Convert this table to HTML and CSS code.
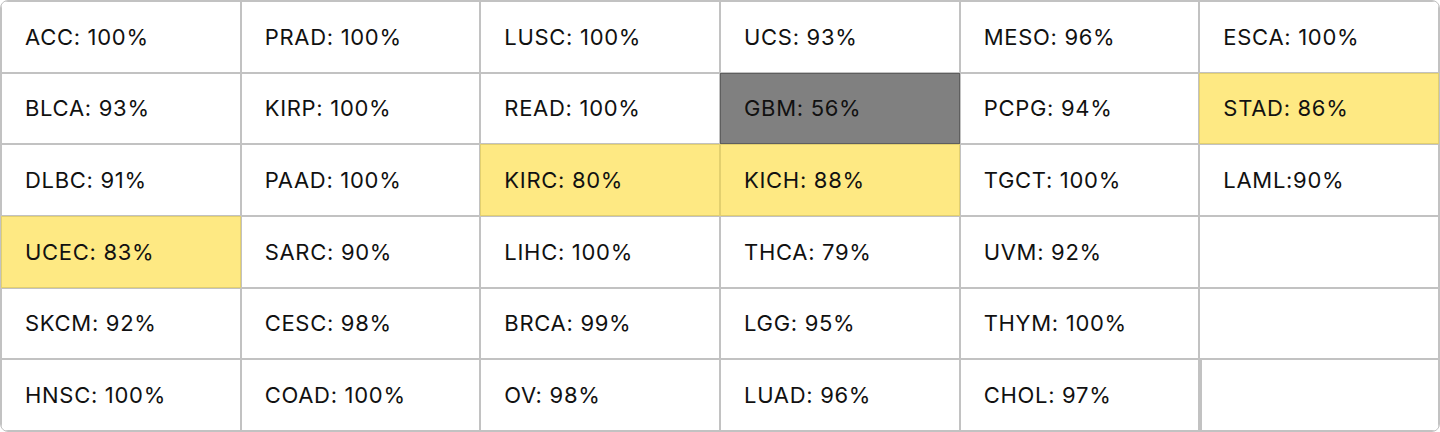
FILE: index.html
```html
<!DOCTYPE html>
<html lang="en">
<head>
<meta charset="utf-8">
<title>Cancer types</title>
<link rel="stylesheet" href="styles.css">
</head>
<body>
<div class="grid">
  <div class="cell">ACC: 100%</div>
  <div class="cell">PRAD: 100%</div>
  <div class="cell">LUSC: 100%</div>
  <div class="cell">UCS: 93%</div>
  <div class="cell">MESO: 96%</div>
  <div class="cell">ESCA: 100%</div>

  <div class="cell">BLCA: 93%</div>
  <div class="cell">KIRP: 100%</div>
  <div class="cell">READ: 100%</div>
  <div class="cell gray">GBM: 56%</div>
  <div class="cell">PCPG: 94%</div>
  <div class="cell yellow">STAD: 86%</div>

  <div class="cell">DLBC: 91%</div>
  <div class="cell">PAAD: 100%</div>
  <div class="cell yellow">KIRC: 80%</div>
  <div class="cell yellow">KICH: 88%</div>
  <div class="cell">TGCT: 100%</div>
  <div class="cell">LAML:90%</div>

  <div class="cell yellow">UCEC: 83%</div>
  <div class="cell">SARC: 90%</div>
  <div class="cell">LIHC: 100%</div>
  <div class="cell">THCA: 79%</div>
  <div class="cell">UVM: 92%</div>
  <div class="cell"></div>

  <div class="cell">SKCM: 92%</div>
  <div class="cell">CESC: 98%</div>
  <div class="cell">BRCA: 99%</div>
  <div class="cell">LGG: 95%</div>
  <div class="cell">THYM: 100%</div>
  <div class="cell"></div>

  <div class="cell">HNSC: 100%</div>
  <div class="cell">COAD: 100%</div>
  <div class="cell">OV: 98%</div>
  <div class="cell">LUAD: 96%</div>
  <div class="cell">CHOL: 97%</div>
  <div class="cell last"></div>
</div>
</body>
</html>
```
FILE: styles.css
```css
html, body {
  margin: 0;
  padding: 0;
  background: #ffffff;
}

.grid {
  box-sizing: border-box;
  width: 1440px;
  height: 432px;
  display: grid;
  grid-template-columns: repeat(6, 1fr);
  grid-template-rows: repeat(6, 1fr);
  border: 1px solid #c2c2c2;
  border-radius: 8px;
  overflow: hidden;
  font-family: Inter, "Noto Sans", sans-serif;
  font-size: 22px;
  letter-spacing: 0.7px;
  color: #111111;
}

.cell {
  box-sizing: border-box;
  border: 1px solid #c2c2c2;
  padding: 0 0 0 23px;
  display: flex;
  align-items: center;
  white-space: nowrap;
}

.yellow {
  background: #fee983;
  border-color: #e3d06f;
}

.gray {
  background: #808080;
  border-color: #5e5e5e;
}

.last {
  border-left: 3px solid #c2c2c2;
}
```
